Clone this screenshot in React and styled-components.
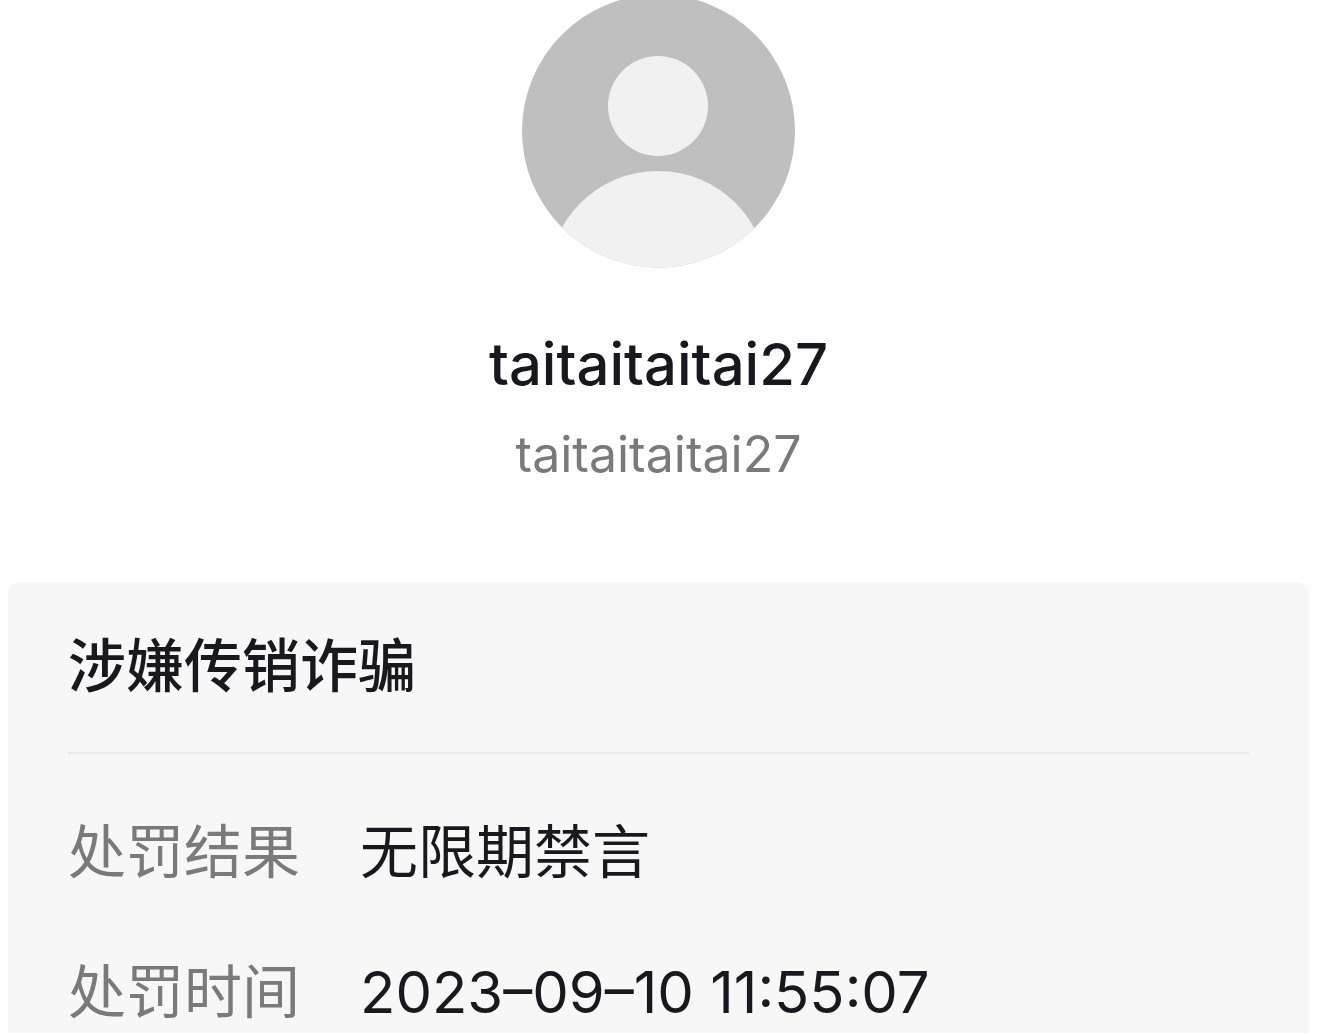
import React from 'react'
import styled, { createGlobalStyle } from 'styled-components';

const GlobalStyle = createGlobalStyle`
  * {
    box-sizing: border-box;
  }

  html, body {
    height: 100%;
  }

  body {
    margin: 0;
    overflow: hidden;
    background-color: #fefefe;
    color: #18181f;
    font-family: Inter, "Noto Sans CJK SC", sans-serif;
  }
`;

const Page = styled.main`
  padding: 0 20px 0 8px;
`;

const Profile = styled.header`
  display: flex;
  flex-direction: column;
  align-items: center;
  padding-bottom: 96px;
`;

const Avatar = styled.svg`
  display: block;
  width: 274px;
  height: 268px;
`;

const Name = styled.h1`
  margin: 60px 0 0 0;
  font-size: 58px;
  font-weight: 500;
  line-height: 72px;
`;

const Account = styled.p`
  margin: 22px 0 0 0;
  color: #7a7a7a;
  font-size: 50px;
  line-height: 64px;
`;

const Card = styled.section`
  background-color: #f7f7f7;
  border-radius: 12px;
  padding: 41px 60px;
`;

const Title = styled.h2`
  margin: 0;
  padding-bottom: 43px;
  border-bottom: 2px solid #e8e8e8;
  font-size: 58px;
  font-weight: 500;
  line-height: 86px;
`;

const Details = styled.dl`
  display: grid;
  grid-template-columns: max-content 1fr;
  column-gap: 60px;
  row-gap: 56px;
  margin: 56px 0 0 0;
  font-size: 58px;
  line-height: 84px;
`;

const Label = styled.dt`
  color: #7a7a7a;
`;

const Value = styled.dd`
  margin: 0;
`;

const details = [
  { label: '处罚结果', value: '无限期禁言' },
  { label: '处罚时间', value: '2023–09–10 11:55:07' },
];

export default function App() {
  return (
    <Page>
      <GlobalStyle />
      <Profile>
        <Avatar viewBox="0 0 274 268" role="img" aria-label="avatar">
          <clipPath id="face">
            <circle cx="136.5" cy="131" r="136.5" />
          </clipPath>
          <g clipPath="url(#face)">
            <rect width="274" height="268" fill="#bfbfbf" />
            <circle cx="136" cy="106" r="50" fill="#f1f1f1" />
            <circle cx="136" cy="281" r="110" fill="#f1f1f1" />
          </g>
        </Avatar>
        <Name>taitaitaitai27</Name>
        <Account>taitaitaitai27</Account>
      </Profile>
      <Card>
        <Title>涉嫌传销诈骗</Title>
        <Details>
          {details.map(({ label, value }) => (
            <React.Fragment key={label}>
              <Label>{label}</Label>
              <Value>{value}</Value>
            </React.Fragment>
          ))}
        </Details>
      </Card>
    </Page>
  )
}
